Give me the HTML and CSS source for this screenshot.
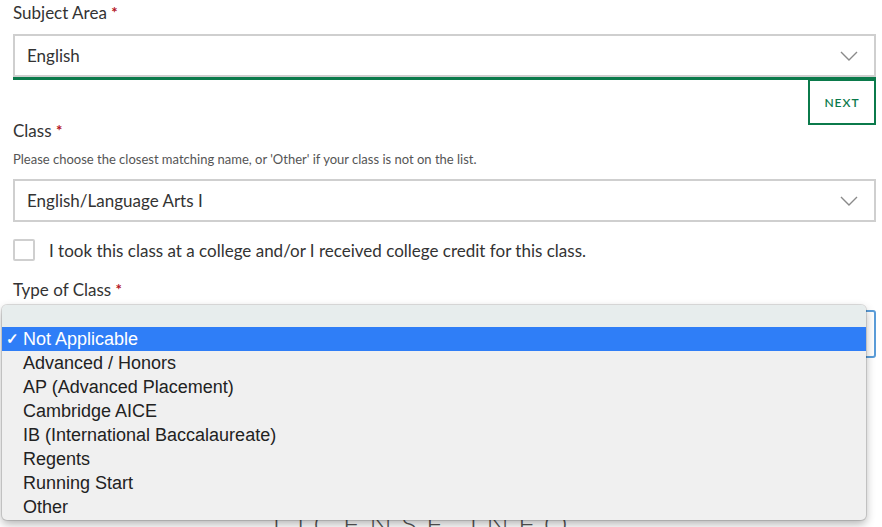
FILE: index.html
```html
<!DOCTYPE html>
<html>
<head>
<meta charset="utf-8">
<link rel="stylesheet" href="styles.css">
</head>
<body>
<div class="page">
  <div class="form">
    <div class="label">Subject Area <span class="req">*</span></div>
    <div class="select select-first">
      <span class="value">English</span>
      <svg class="chev" width="18" height="10" viewBox="0 0 18 10"><path d="M1 1 L9 9 L17 1" fill="none" stroke="#8a8a8a" stroke-width="1.4"/></svg>
    </div>
    <div class="green-line"></div>
    <div class="next-row"><button class="next">NEXT</button></div>

    <div class="label label-class">Class <span class="req">*</span></div>
    <div class="help">Please choose the closest matching name, or 'Other' if your class is not on the list.</div>
    <div class="select">
      <span class="value">English/Language Arts I</span>
      <svg class="chev" width="18" height="10" viewBox="0 0 18 10"><path d="M1 1 L9 9 L17 1" fill="none" stroke="#8a8a8a" stroke-width="1.4"/></svg>
    </div>

    <label class="check-row">
      <span class="checkbox"></span>
      <span class="check-text">I took this class at a college and/or I received college credit for this class.</span>
    </label>

    <div class="label label-type">Type of Class <span class="req">*</span></div>
    <div class="select select-focus"></div>
    <div class="behind">LICENSE INFO</div>
  </div>

  <div class="menu">
    <div class="menu-top"></div>
    <div class="item selected"><span class="tick">✓</span>Not Applicable</div>
    <div class="item">Advanced / Honors</div>
    <div class="item">AP (Advanced Placement)</div>
    <div class="item">Cambridge AICE</div>
    <div class="item">IB (International Baccalaureate)</div>
    <div class="item">Regents</div>
    <div class="item">Running Start</div>
    <div class="item">Other</div>
  </div>
</div>
</body>
</html>
```

FILE: styles.css
```css
html, body {
  margin: 0;
  padding: 0;
  background: #fff;
  overflow: hidden;
}
.page {
  position: relative;
  width: 882px;
  height: 527px;
  overflow: hidden;
}
.form {
  padding: 2px 6px 0 13px;
  font-family: Lato, "Noto Sans", sans-serif;
  color: #333;
}
.label {
  font-size: 17px;
  line-height: 20px;
  height: 20px;
}
.req {
  color: #b3121e;
  font-size: 15px;
  font-weight: bold;
  vertical-align: 1px;
}
.select {
  box-sizing: border-box;
  height: 43px;
  border: 2px solid #cfcfcf;
  display: flex;
  align-items: center;
  justify-content: space-between;
  padding: 0 16px 0 12px;
  background: #fff;
}
.select-first {
  margin-top: 12px;
}
.value {
  font-size: 17px;
}
.green-line {
  height: 3px;
  background: #0b7a4b;
}
.next-row {
  display: flex;
  justify-content: flex-end;
}
.next {
  box-sizing: border-box;
  width: 68px;
  height: 46px;
  margin-top: -1px;
  border: 2px solid #0b7a4b;
  background: #fff;
  color: #0b7a4b;
  font-family: Lato, sans-serif;
  font-size: 12px;
  font-weight: 600;
  letter-spacing: 1px;
  padding: 0;
}
.label-class {
  margin-top: -5px;
}
.help {
  font-size: 13px;
  color: #555;
  line-height: 16px;
  margin-top: 11px;
  margin-bottom: 12px;
}
.check-row {
  display: flex;
  align-items: center;
  margin-top: 17px;
  height: 22px;
}
.checkbox {
  box-sizing: border-box;
  width: 22px;
  height: 22px;
  border: 2px solid #cfcfcf;
  border-radius: 2px;
  margin-right: 14px;
}
.check-text {
  font-size: 17px;
}
.label-type {
  margin-top: 18px;
}
.select-focus {
  margin-top: 11px;
  height: 48px;
  border: 2px solid #5b9dd9;
  border-radius: 3px;
}
.behind {
  margin-top: 150px;
  text-align: center;
  font-size: 30px;
  font-weight: 300;
  letter-spacing: 9px;
  color: #555;
  line-height: 30px;
  padding-right: 40px;
}
.menu {
  position: absolute;
  left: 2px;
  top: 305px;
  width: 864px;
  height: 215px;
  box-sizing: border-box;
  background: #f0f0f0;
  border-radius: 5px;
  box-shadow: 0 0 0 1px rgba(0,0,0,0.12), 0 4px 10px rgba(0,0,0,0.3);
  overflow: hidden;
  font-family: "Liberation Sans", Arial, sans-serif;
  color: #222;
}
.menu-top {
  height: 22px;
  background: #e7eded;
}
.item {
  height: 24px;
  line-height: 24px;
  font-size: 18px;
  padding-left: 21px;
  position: relative;
}
.item.selected {
  background: #2f7ef7;
  color: #fff;
}
.tick {
  position: absolute;
  left: 4px;
  font-size: 15px;
  font-weight: bold;
}
```
